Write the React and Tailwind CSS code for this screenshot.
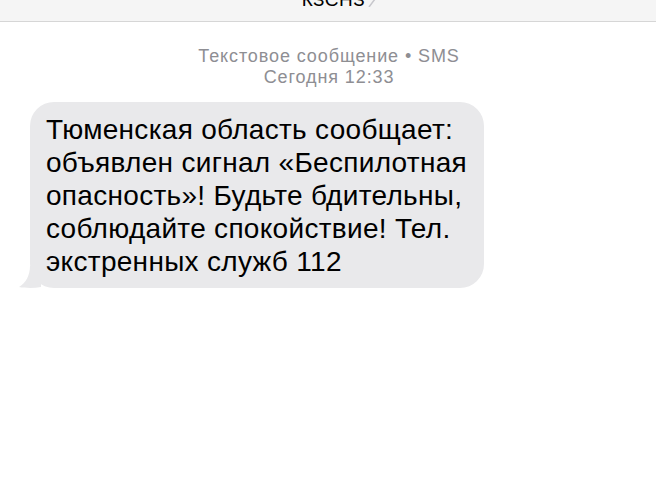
import React from "react";

const lines = [
  "Тюменская область сообщает:",
  "объявлен сигнал «Беспилотная",
  "опасность»! Будьте бдительны,",
  "соблюдайте спокойствие! Тел.",
  "экстренных служб 112",
];

const App = () => {
  return (
    <div
      className="w-[656px] h-[492px] bg-white overflow-hidden"
      style={{ fontFamily: '"Liberation Sans", Arial, sans-serif' }}
    >
      <div className="h-[22px] bg-[#f5f5f5] border-b border-[#d6d6d6] flex justify-center items-start overflow-hidden">
        <div className="flex items-start gap-[3px] -mt-[10px] pl-[22px]">
          <span className="text-[19px] leading-[19px] tracking-[0.5px] text-black">КЗСНЗ</span>
          <svg width="8" height="16" viewBox="0 0 8 16" className="mt-[1px]">
            <path d="M1 0l6 8-6 8" fill="none" stroke="#c7c7cc" strokeWidth="1.5" />
          </svg>
        </div>
      </div>

      <div className="flex flex-col items-center pt-[24px] text-[#8e8e93] text-[18px] leading-[21px] tracking-[0.9px] pl-[2px]">
        <div>Текстовое сообщение • SMS</div>
        <div>Сегодня 12:33</div>
      </div>

      <div className="relative ml-[30px] mt-[14px] w-[454px] rounded-[24px] bg-[#e9e9eb] pl-[16px] pr-3 pt-[11px] pb-[10px]">
        <svg
          width="22"
          height="22"
          viewBox="0 0 22 22"
          className="absolute -left-[11px] bottom-0"
        >
          <path d="M22 0 V21 C14 22.5 6 22 0 21 C7 17 11 9 11 0 Z" fill="#e9e9eb" />
        </svg>
        <div className="relative text-[28px] leading-[33px] text-black tracking-[0.3px]">
          {lines.map((l) => (
            <div key={l} className="whitespace-nowrap">{l}</div>
          ))}
        </div>
      </div>
    </div>
  );
};

export default App;
